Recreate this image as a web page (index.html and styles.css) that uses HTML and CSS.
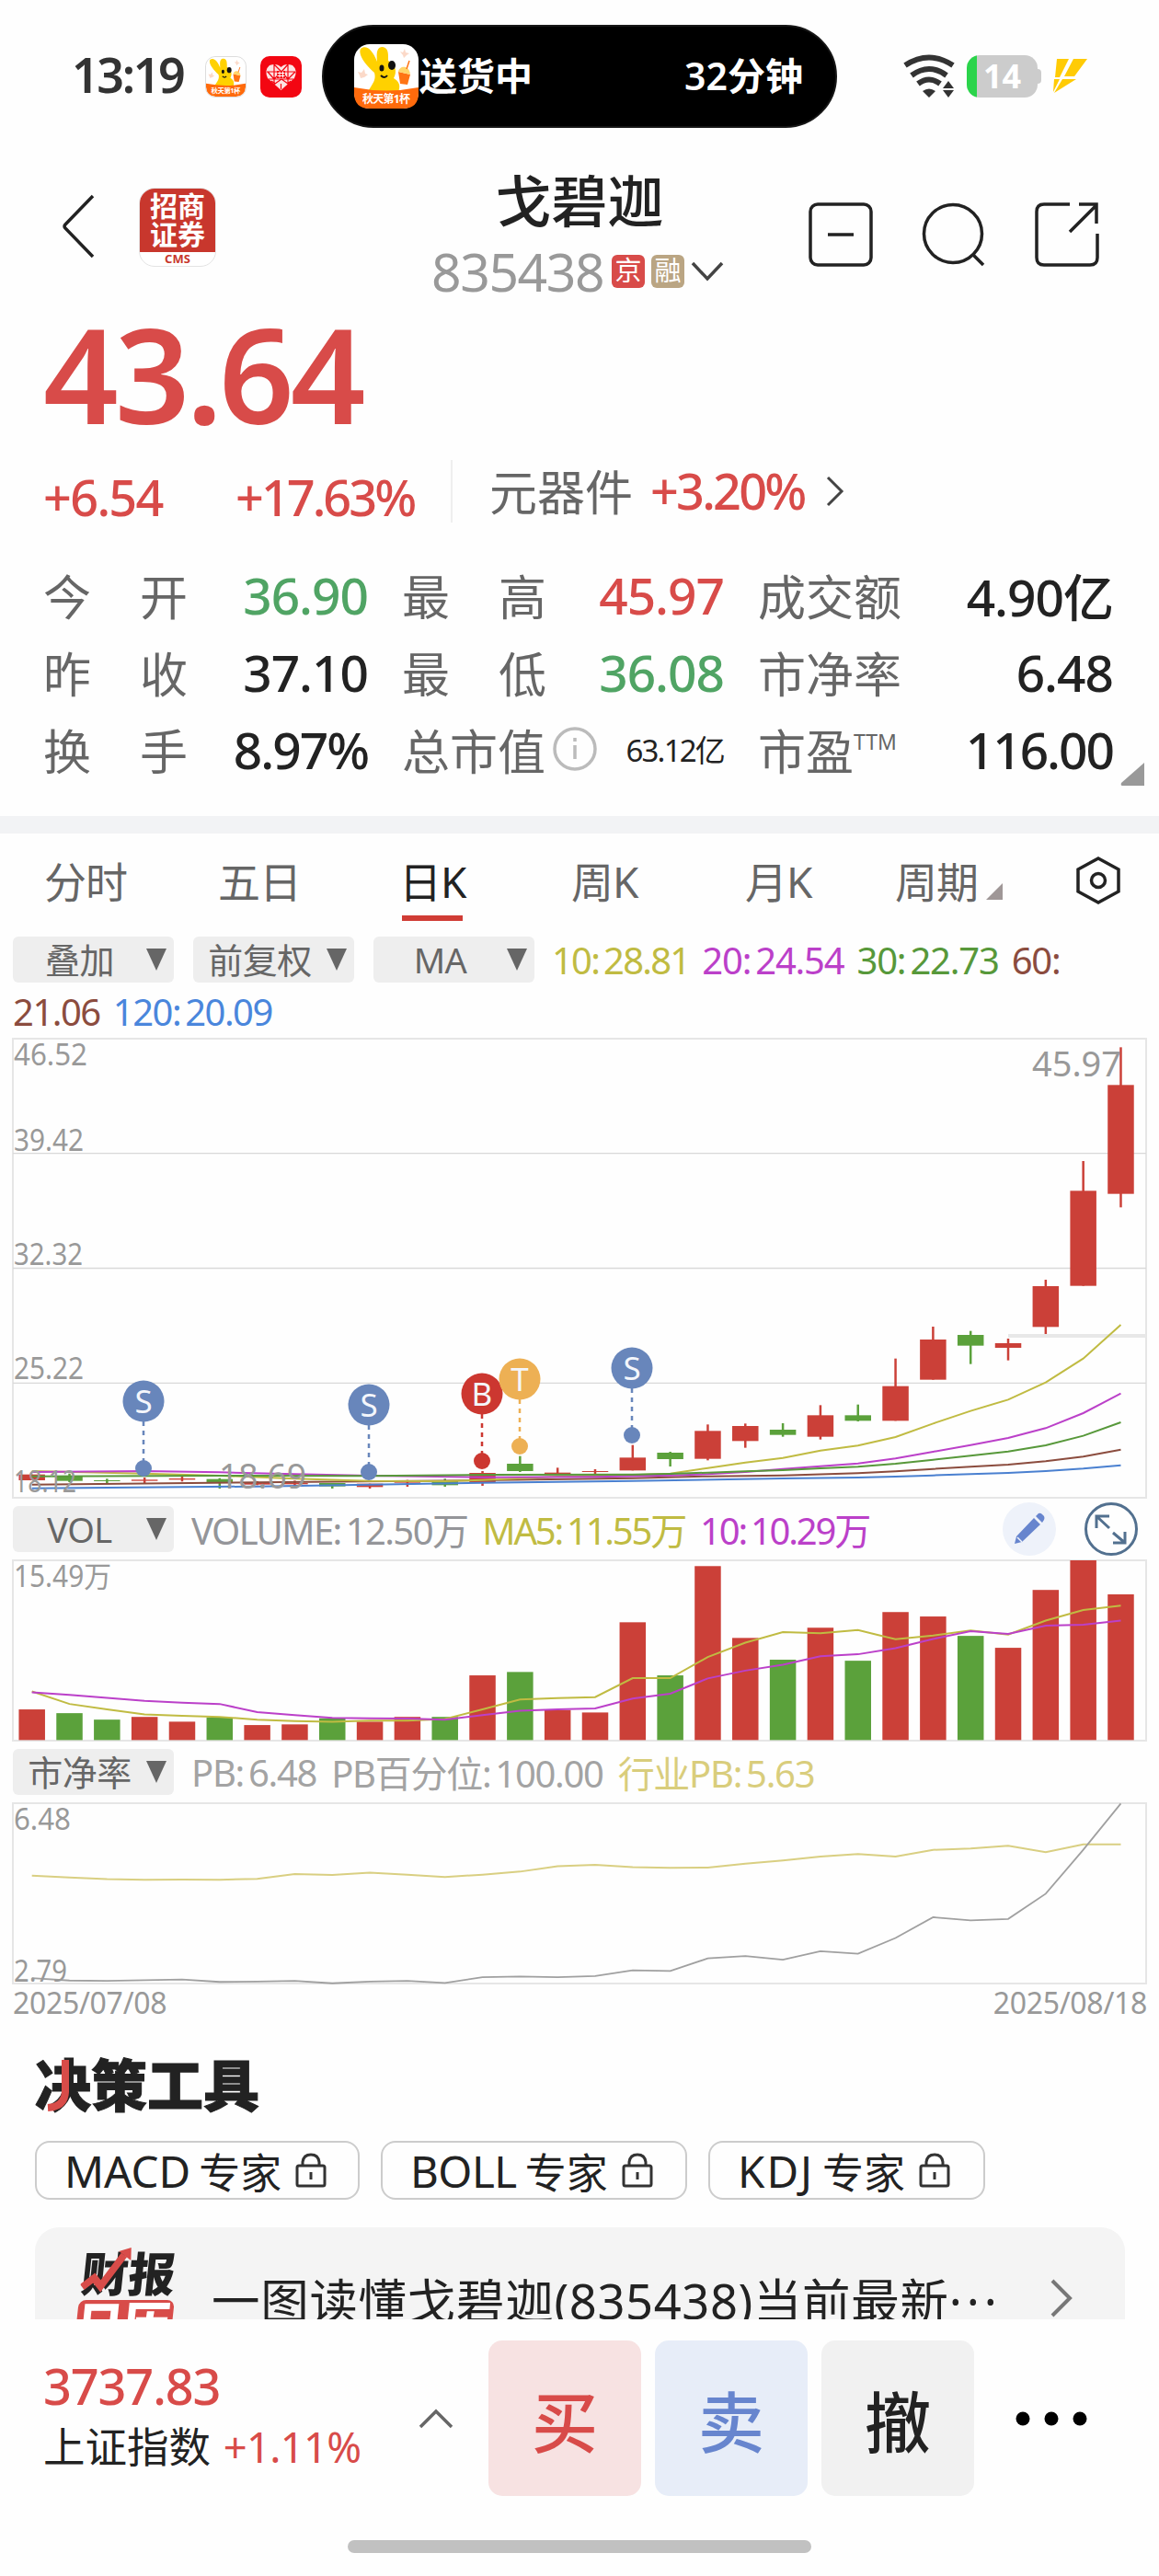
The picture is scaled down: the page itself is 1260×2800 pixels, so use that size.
FILE: index.html
```html
<!DOCTYPE html>
<html lang="zh-CN">
<head>
<meta charset="UTF-8">
<meta name="viewport" content="width=device-width, initial-scale=1.0">
<title>戈碧迦 835438</title>
<link rel="stylesheet" href="styles.css">
</head>
<body>

<!-- 公共图形 -->
<svg width="0" height="0" class="defs">
  <symbol id="rabbit" viewBox="0 0 70 70">
    <rect width="70" height="70" rx="17" fill="#fff"/>
    <path d="M13 58 C16 45 25 42 22 31 C12 22 4 11 7 5 C13 0 20 6 25 19 C24 8 25 3 31 3 C38 4 37 12 37 18 C45 21 47 30 43 37 C53 43 49 50 45 60 L13 60z" fill="#ffd100"/>
    <ellipse cx="30" cy="26" rx="2.5" ry="3.5" fill="#111"/>
    <ellipse cx="41" cy="23" rx="4" ry="5" fill="#111"/>
    <path d="M29 34 q4 4 7 0" stroke="#111" stroke-width="2" fill="none"/>
    <path d="M48 30 L61 33 L58 44 L50 43z" fill="#ff7414"/>
    <path d="M48 30 C49 23 60 22 61 33z" fill="#ffd56a"/>
    <path d="M57 27 L60 18" stroke="#ff7414" stroke-width="1.5"/>
    <path d="M4 30l4 1 3-4 1 5 3 1-4 3-4 1-1-3z M50 8l3 1 2-4 1 4 4 1-3 2-3 3-1-3z" fill="#fbd9c8"/>
    <path d="M0 47 Q35 54 70 47 V53 Q70 70 53 70 H17 Q0 70 0 53z" fill="#ff6a0c"/>
    <text x="35" y="64" text-anchor="middle" textLength="52" font-size="12" font-weight="700" fill="#fff">秋天第1杯</text>
  </symbol>
  <symbol id="lock" viewBox="0 0 34 38">
    <rect x="2" y="14" width="30" height="22" rx="2"/>
    <path d="M8 14 V10 Q9 2 17 2 Q25 2 26 10 V14 M17 21 V29"/>
  </symbol>
</svg>

<div class="status-bar">
  <div class="status-left">
    <span class="clock">13:19</span>
    <svg class="app-icon bordered" viewBox="0 0 70 70"><use href="#rabbit"/></svg>
    <svg class="app-icon" viewBox="0 0 45 45">
      <rect width="45" height="45" rx="10" fill="#f30612"/>
      <path d="M22.5 37 L8 24 Q4 15 10 10 Q18 7 22.5 12 Q27 7 35 10 Q41 15 37 24z" fill="#fde3e3"/>
      <path d="M7 17h31M9 25h27M15 9v22M30 9v22M15 9l8 8 7-8M8 17l7 8 8-8 7 8 8-8M12 27l4 3 7-5 7 5 3-3M22.500 30v6" stroke="#f30612" stroke-width="1.200" fill="none"/>
      <rect x="18" y="16" width="9" height="8" fill="#f30612"/>
      <path d="M18.500 18.500h8M18.500 21.500h8M21 16.500v7M24.500 16.500v7" stroke="#fff" stroke-width="1"/>
    </svg>
  </div>
  <div class="island">
    <svg class="island-icon" viewBox="0 0 70 70"><use href="#rabbit"/></svg>
    <span>送货中</span>
    <span class="eta">32分钟</span>
  </div>
  <div class="status-right">
    <svg width="58" height="48" viewBox="0 0 58 48" fill="none" stroke="#333" stroke-width="6">
      <path d="M3 12 Q29 -5 55 12"/>
      <path d="M10 23 Q29 9 48 23"/>
      <path d="M17 32 Q29 23 41 32"/>
      <path d="M22 40 Q29 35 36 40 L29 47z M50 29l6 8H44z M44 39h12l-6 8z" fill="#333" stroke="none"/>
    </svg>
    <div class="battery"><span>14</span></div>
    <svg class="bolt" width="40" height="40" viewBox="0 0 40 40">
      <path d="M6 1 H19 L9 21 H4z M24 1 H39 L25 20 H14z M3 23 H9 L2 37z M12 23 H27 L3 38z" fill="#ffcb05"/>
    </svg>
  </div>
</div>

<header class="header">
  <svg class="back" width="36" height="70" viewBox="0 0 36 70"><path d="M34 2 L4 33 Q2 35 4 37 L34 68"/></svg>
  <div class="broker">
    <div>招商<br>证券</div>
    <span>CMS</span>
  </div>
  <div class="title">
    <h1>戈碧迦</h1>
    <div class="code">
      <span>835438</span>
      <b class="tag red">京</b>
      <b class="tag gold">融</b>
      <svg width="36" height="24" viewBox="0 0 36 24"><path d="M2 3 L18 20 L34 3"/></svg>
    </div>
  </div>
  <div class="tools">
    <svg width="70" height="70" viewBox="0 0 70 70"><rect x="2" y="2" width="66" height="66" rx="8"/><path d="M21 35 H49"/></svg>
    <svg width="70" height="70" viewBox="0 0 70 70"><circle cx="34" cy="34" r="31.500"/><path d="M56 57 L67 68"/></svg>
    <svg width="70" height="70" viewBox="0 0 70 70"><path d="M38 2 H10 Q2 2 2 10 V60 Q2 68 10 68 H60 Q68 68 68 60 V34 M48 2 H67 V23 M67 3 L38 32"/></svg>
  </div>
</header>

<section class="quote">
  <div class="price">43.64</div>
  <div class="change">
    <span class="chg">+6.54</span>
    <span class="pct">+17.63%</span>
    <div class="sector">
      <span class="sector-name">元器件</span>
      <span class="sector-pct">+3.20%</span>
      <svg width="20" height="34" viewBox="0 0 20 34"><path d="M2 2 L17 17 L2 32"/></svg>
    </div>
  </div>
  <div class="stats">
    <div><label>今<i></i>开</label><b class="down">36.90</b></div>
    <div><label>最<i></i>高</label><b class="up">45.97</b></div>
    <div><label>成交额</label><b>4.90亿</b></div>
    <div><label>昨<i></i>收</label><b>37.10</b></div>
    <div><label>最<i></i>低</label><b class="down">36.08</b></div>
    <div><label>市净率</label><b>6.48</b></div>
    <div><label>换<i></i>手</label><b class="tight">8.97%</b></div>
    <div>
      <label>总市值</label>
      <svg class="info" width="48" height="48" viewBox="0 0 48 48"><circle cx="24" cy="24" r="22"/><path d="M24 20 V35 M24 12 V16"/></svg>
      <b class="small">63.12亿</b>
    </div>
    <div><label>市盈<sup>TTM</sup></label><b class="tight">116.00</b></div>
  </div>
  <svg class="corner" width="27" height="26" viewBox="0 0 27 26"><path d="M26 0 V25 H2 Q0 25 1 22z"/></svg>
</section>

<nav class="tabs">
  <a>分时</a>
  <a>五日</a>
  <a class="active">日K</a>
  <a>周K</a>
  <a>月K</a>
  <a>周期<svg width="18" height="18" viewBox="0 0 18 18"><path d="M18 0 V18 H0z" fill="#9f9797"/></svg></a>
  <svg class="setting" width="48" height="52" viewBox="0 0 48 52"><path d="M24 2 L46 14 V38 L24 50 L2 38 V14z"/><circle cx="24" cy="26" r="7.500"/></svg>
</nav>

<div class="legend">
  <span class="select"><em>叠加</em></span>
  <span class="select"><em>前复权</em></span>
  <span class="select"><em>MA</em></span>
  <span class="c10">10:<s></s>28.81</span>
  <span class="c20">20:<s></s>24.54</span>
  <span class="c30">30:<s></s>22.73</span>
  <span class="c60">60:</span>
</div>
<div class="legend second">
  <span class="c60">21.06</span>
  <span class="c120">120:<s></s>20.09</span>
</div>

<svg id="kline" class="chart" width="1260" height="516" viewBox="0 0 1260 516"></svg>

<div class="legend sub vol">
  <span class="select"><em>VOL</em></span>
  <span class="grey">VOLUME:<s></s>12.50万</span>
  <span class="c10">MA5:<s></s>11.55万</span>
  <span class="c20">10:<s></s>10.29万</span>
  <div class="round-btns">
    <svg width="58" height="58" viewBox="0 0 58 58">
      <circle cx="29" cy="29" r="29" fill="#eef2fa"/>
      <path d="M13 45 L15 37 L34 17 L41 24 L21 43z M36 15 L39 12 Q41 11 43 13 L45 15 Q46 17 45 19 L43 22z" fill="#6785ce"/>
      <path d="M16 38l5 5" stroke="#eef2fa" stroke-width="1.500"/>
    </svg>
    <svg width="58" height="58" viewBox="0 0 58 58" fill="none" stroke="#52708f" stroke-width="3">
      <circle cx="29" cy="29" r="27.500"/>
      <path d="M27 15 H13 V28 M13 15 L27 28 M31 44 H44 V32 M44 44 L31 33"/>
    </svg>
  </div>
</div>

<svg id="volume" class="chart" width="1260" height="213" viewBox="0 0 1260 213"></svg>

<div class="legend sub">
  <span class="select"><em>市净率</em></span>
  <span class="grey2">PB:<s></s>6.48</span>
  <span class="grey2">PB百分位:<s></s>100.00</span>
  <span class="sand">行业PB:<s></s>5.63</span>
</div>

<svg id="pb" class="chart" width="1260" height="206" viewBox="0 0 1260 206"></svg>

<div class="dates"><span>2025/07/08</span><span>2025/08/18</span></div>

<section class="decision">
  <h2>决策工具<svg width="26" height="58" viewBox="0 0 26 58"><path d="M20 1 V36 Q19 52 1 53" stroke="#d84c49" stroke-width="8" fill="none"/></svg></h2>
  <div class="experts">
    <span>MACD<em>专家</em><svg width="34" height="38"><use href="#lock"/></svg></span>
    <span>BOLL<em>专家</em><svg width="34" height="38"><use href="#lock"/></svg></span>
    <span>KDJ<em>专家</em><svg width="34" height="38"><use href="#lock"/></svg></span>
  </div>
  <div class="report">
    <div class="report-logo">
      <strong>财报</strong>
      <strong class="badge">日历</strong>
      <svg width="54" height="50" viewBox="0 0 54 50"><path d="M2 43 L14 33 L22 42 L44 8" fill="none" stroke="#d84c49" stroke-width="8"/><path d="M38 4 L51 0 L52 14z" fill="#d84c49"/></svg>
    </div>
    <p>一图读懂戈碧迦<span class="num">(835438)</span>当前最新<span>···</span></p>
    <svg class="more" width="26" height="42" viewBox="0 0 26 42"><path d="M3 2 L22 21 L3 40"/></svg>
  </div>
</section>

<footer class="trade">
  <div class="index">
    <div class="index-value">3737.83</div>
    <div class="index-name">上证指数 <span>+1.11%</span></div>
  </div>
  <svg class="expand" width="38" height="22" viewBox="0 0 38 22"><path d="M2 20 L19 3 L36 20"/></svg>
  <button class="buy">买</button>
  <button class="sell">卖</button>
  <button class="cancel">撤</button>
  <svg class="dots" width="80" height="16" viewBox="0 0 80 16"><circle cx="9" cy="8" r="7.500"/><circle cx="40" cy="8" r="7.500"/><circle cx="71" cy="8" r="7.500"/></svg>
</footer>
<div class="home-bar"></div>

<script src="chart.js"></script>
</body>
</html>
```
FILE: styles.css
```css
* {
  box-sizing: border-box;
}

body {
  margin: 0;
  width: 1260px;
  height: 2800px;
  overflow: hidden;
  background: #fefefe;
  color: #222;
  font-family: "Noto Sans", "Noto Sans CJK SC", sans-serif;
  display: flex;
  flex-direction: column;
}

svg {
  display: block;
  flex: none;
}

em, i {
  font-style: normal;
}

.defs {
  position: absolute;
}

/* 状态栏 */
.status-bar {
  height: 166px;
  flex: none;
  display: flex;
  padding-top: 27px;
}

.status-left {
  width: 350px;
  height: 112px;
  padding-left: 78px;
  display: flex;
  align-items: center;
}

.clock {
  width: 145px;
  padding-bottom: 5px;
  font-size: 52px;
  font-weight: 600;
  letter-spacing: -2.4px;
  color: #333;
}

.app-icon {
  width: 45px;
  height: 45px;
  margin-right: 15px;
}

.bordered {
  border: 1px solid #ddd;
  border-radius: 11px;
}

.island {
  width: 560px;
  height: 112px;
  border-radius: 56px;
  border: 2px solid #161616;
  background: #000;
  color: #fff;
  display: flex;
  align-items: center;
  padding: 0 35px 0 33px;
  font-size: 41px;
  font-weight: 600;
}

.island span {
  padding-bottom: 6px;
}

.island-icon {
  width: 70px;
  height: 70px;
  margin-right: 1px;
}

.eta {
  margin-left: auto;
}

.status-right {
  height: 112px;
  padding-left: 71px;
  display: flex;
  align-items: center;
}

.battery {
  width: 77px;
  height: 46px;
  margin-left: 12px;
  border-radius: 14px;
  background: linear-gradient(90deg, #2bd44b 11px, #ccc 11px);
  color: #fff;
  font-size: 36px;
  font-weight: 700;
  line-height: 46px;
  text-align: center;
  position: relative;
}

.battery::after {
  content: "";
  position: absolute;
  right: -4px;
  top: 15px;
  width: 4px;
  height: 16px;
  border-radius: 0 4px 4px 0;
  background: #ccc;
}

.bolt {
  margin-left: 15px;
}

/* 标题栏 */
.header {
  height: 170px;
  flex: none;
  display: flex;
  align-items: flex-start;
}

.header svg {
  fill: none;
  stroke: #222;
  stroke-width: 3.5;
}

.back {
  margin: 45px 0 0 67px;
}

.broker {
  width: 84px;
  height: 86px;
  margin: 38px 0 0 48px;
  border-radius: 17px;
  border: 1px solid #e4e4e4;
  background: #fff;
  overflow: hidden;
  text-align: center;
}

.broker div {
  height: 69px;
  padding-top: 3px;
  background: #c8372d;
  color: #fff;
  font-size: 30px;
  line-height: 31px;
  font-weight: 700;
}

.broker span {
  display: block;
  color: #c8372d;
  font-size: 13px;
  line-height: 14px;
  font-weight: 700;
}

.title {
  width: 322px;
  margin-left: 234px;
}

h1 {
  margin: 15px 0 0;
  font-size: 61px;
  line-height: 76px;
  font-weight: 500;
  text-align: center;
}

.code {
  display: flex;
  align-items: center;
  height: 76px;
  font-size: 57px;
  letter-spacing: -1.4px;
  color: #999;
}

.code > span {
  width: 196px;
}

.tag {
  width: 36px;
  height: 36px;
  margin-right: 7px;
  border-radius: 6px;
  color: #fff;
  font-size: 29px;
  line-height: 34px;
  letter-spacing: 0;
  font-weight: 400;
  text-align: center;
}

.tag.red { background: #d84b49; }
.tag.gold { background: #baa583; }

.code svg {
  stroke: #444;
}

.tools {
  display: flex;
  gap: 53px;
  margin: 54px 0 0 88px;
}

/* 行情 */
.quote {
  height: 551px;
  flex: none;
  padding: 0 48px 0 47px;
  position: relative;
}

.price {
  height: 146px;
  font-size: 143px;
  line-height: 140px;
  font-weight: 600;
  letter-spacing: -4px;
  color: #d84b49;
}

.change {
  display: flex;
  align-items: center;
  height: 82px;
  margin-top: 11px;
  font-size: 54px;
  font-weight: 500;
  letter-spacing: -1.7px;
  color: #d84b49;
}

.chg,
.pct {
  padding-top: 11px;
}

.chg { width: 209px; }

.pct {
  width: 234px;
  letter-spacing: -3px;
}

.sector {
  height: 68px;
  padding-left: 40px;
  border-left: 2px solid #efefef;
  display: flex;
  align-items: center;
}

.sector-name {
  width: 175px;
  margin-top: -4px;
  font-size: 52px;
  font-weight: 400;
  letter-spacing: 0;
  color: #666;
}

.sector-pct {
  width: 191px;
  margin-top: -3px;
  letter-spacing: -2.8px;
}

.sector svg {
  fill: none;
  stroke: #444;
  stroke-width: 3;
}

.stats {
  display: grid;
  grid-template-columns: 353px 350px 386px;
  grid-auto-rows: 84px;
  column-gap: 37px;
  margin-top: 29px;
}

.stats > div {
  display: flex;
  align-items: center;
}

.stats label {
  display: flex;
  font-size: 52px;
  color: #666;
}

.stats i {
  width: 53px;
}

.stats b {
  margin-left: auto;
  font-size: 55px;
  font-weight: 500;
  letter-spacing: -1px;
}

.stats b.tight {
  letter-spacing: -2px;
}

.stats b.small {
  font-size: 33px;
  font-weight: 400;
  letter-spacing: -1.8px;
}

.up { color: #d84b49; }
.down { color: #50a464; }

.stats sup {
  font-size: 23px;
  line-height: 58px;
}

.info {
  margin-left: 8px;
  fill: none;
  stroke: #bbb;
  stroke-width: 3.5;
}

.corner {
  position: absolute;
  right: 15px;
  bottom: 32px;
  fill: #999;
}

/* 周期 */
.tabs {
  height: 131px;
  flex: none;
  border-top: 19px solid #f2f3f5;
  display: flex;
  align-items: flex-start;
  padding-left: 48px;
}

.tabs a {
  width: 189px;
  height: 96px;
  font-size: 46px;
  line-height: 104px;
  letter-spacing: -1px;
  color: #666;
}

.tabs a:nth-child(2) { width: 197px; }
.tabs a:nth-child(3) { width: 187px; }
.tabs a:nth-child(5) { width: 163px; }

.tabs a:nth-child(6) {
  display: flex;
  width: 197px;
}

.tabs a svg {
  margin: 54px 0 0 9px;
}

.tabs .active {
  color: #222;
  background: linear-gradient(#d03c35, #d03c35) 3px 89px / 66px 6px no-repeat;
}

.setting {
  margin-top: 25px;
  fill: none;
  stroke: #222;
  stroke-width: 3.5;
}

/* 指标行 */
.legend {
  height: 50px;
  flex: none;
  padding-left: 14px;
  display: flex;
  align-items: center;
  font-size: 40px;
  letter-spacing: -1.2px;
  white-space: nowrap;
}

.legend > span {
  margin-right: 14px;
}

.legend s {
  display: inline-block;
  width: 5px;
}

.legend .c10 {
  letter-spacing: -1.8px;
}

.legend.second {
  height: 52px;
  padding-top: 11px;
  letter-spacing: -1.5px;
}

.legend .select {
  width: 175px;
  height: 50px;
  margin-right: 21px;
  border-radius: 6px;
  background: #eee;
  color: #666;
  font-size: 38px;
  line-height: 50px;
  letter-spacing: -0.5px;
  display: flex;
  align-items: center;
}

.legend .select:nth-child(3) {
  margin-right: 19px;
}

.select em {
  flex: 1;
  text-align: center;
}

.select::after {
  content: "";
  margin-right: 8px;
  border: 11px solid transparent;
  border-top: 24px solid #666;
  border-bottom: 0;
}

.c10 { color: #c0bb42; }
.c20 { color: #bb40c9; }
.c30 { color: #57983a; }
.c60 { color: #8b4c3e; }
.c120 { color: #4a86dc; }
.grey { color: #949599; }
.grey2 { color: #a3a3a3; }
.sand { color: #d9cd7c; }

.legend.sub {
  margin-top: 1px;
  letter-spacing: -1.3px;
}

.legend.sub > span {
  margin-right: 16px;
}

.legend.sub .select {
  margin-right: 19px;
}

.legend.vol {
  letter-spacing: -1.6px;
}

.legend.vol .c10,
.legend.vol .c20 {
  letter-spacing: -2.2px;
}

.round-btns {
  display: flex;
  gap: 31px;
  margin: 0 23px 0 auto;
}

.dates {
  height: 44px;
  flex: none;
  display: flex;
  justify-content: space-between;
  padding: 0 13px 0 14px;
  font-size: 32px;
  line-height: 39px;
  letter-spacing: -0.3px;
  color: #999;
}

/* 决策工具 */
.decision {
  height: 320px;
  flex: none;
  overflow: hidden;
  padding: 28px 37px 0 38px;
}

h2 {
  width: 250px;
  margin: 0;
  font-size: 61px;
  line-height: 76px;
  font-weight: 900;
  -webkit-text-stroke: 1px #222;
  position: relative;
}

h2 svg {
  position: absolute;
  left: 13px;
  top: 9px;
}

.experts {
  display: flex;
  gap: 23px;
  margin-top: 22px;
}

.experts span {
  width: 353px;
  height: 64px;
  padding-left: 30px;
  border: 2px solid #ccc;
  border-radius: 16px;
  display: flex;
  align-items: center;
  font-size: 47.5px;
}

.experts span:nth-child(2) {
  width: 333px;
  letter-spacing: -0.5px;
}

.experts span:nth-child(3) {
  width: 301px;
  letter-spacing: 2px;
}

.experts em {
  margin: 0 15px 0 9px;
  font-size: 45px;
  letter-spacing: 0;
}

.experts svg {
  fill: none;
  stroke: #333;
  stroke-width: 3;
}

.report {
  height: 154px;
  margin-top: 30px;
  border-radius: 26px 26px 0 0;
  background: #f4f4f4;
  display: flex;
  align-items: center;
  padding: 0 56px 0 48px;
}

.report-logo {
  width: 144px;
  position: relative;
  transform: skewX(-6deg);
}

.report-logo strong {
  display: block;
  width: 104px;
  font-size: 51px;
  line-height: 50px;
  font-weight: 900;
}

.report-logo .badge {
  margin-top: 4px;
  border-radius: 8px;
  background: #d84c49;
  color: #fff;
}

.report-logo svg {
  position: absolute;
  left: 0;
  top: -3px;
}

.report p {
  margin: 0;
  font-size: 52.5px;
  letter-spacing: 0.7px;
  white-space: nowrap;
}

.report p span {
  letter-spacing: 5px;
}

.report p .num {
  letter-spacing: 0.6px;
}

.more {
  margin-left: auto;
  fill: none;
  stroke: #777;
  stroke-width: 4;
}

/* 底部交易栏 */
.trade {
  height: 234px;
  flex: none;
  padding-left: 47px;
  display: flex;
  align-items: flex-start;
  padding-top: 23px;
}

.index {
  width: 408px;
  padding-top: 12px;
}

.index-value {
  font-size: 54px;
  line-height: 74px;
  font-weight: 500;
  letter-spacing: -1.1px;
  color: #d84b49;
}

.index-name {
  font-size: 45.5px;
  line-height: 58px;
  white-space: nowrap;
}

.index-name span {
  color: #d84b49;
  margin-left: 2px;
  letter-spacing: -0.8px;
}

.expand {
  margin: 74px 38px 0 0;
  fill: none;
  stroke: #666;
  stroke-width: 3.5;
}

.trade button {
  width: 166px;
  height: 169px;
  margin-right: 15px;
  padding: 0;
  border: none;
  border-radius: 15px;
  font-family: inherit;
  font-size: 72px;
  font-weight: 500;
}

.buy { background: #f7e2e2; color: #d84b49; }
.sell { background: #e7edf8; color: #6785ce; }
.cancel { background: #f1f1f1; color: #222; }

.dots {
  margin: 77px 0 0 29px;
}

.home-bar {
  width: 504px;
  height: 14px;
  flex: none;
  margin: 6px auto 0;
  border-radius: 7px;
  background: #c1c1c1;
}
```
FILE: chart.js
```js
const RED = '#cb4038', GREEN = '#5ba13b', GRID = '#e6e6e6';
const STEP = 40.82, X0 = 34.7, BAR = 28.5;
const x = i => X0 + i * STEP;

const line = (x1, y1, x2, y2, color, w, extra = '') =>
  `<line x1="${x1}" y1="${y1}" x2="${x2}" y2="${y2}" stroke="${color}" stroke-width="${w}" ${extra}/>`;

const frame = (top, bottom) =>
  `<rect x="14" y="${top}" width="1232" height="${bottom - top}" fill="none" stroke="${GRID}" stroke-width="2"/>`;

const label = (px, y, text, len, size = 32, color = '#999') =>
  `<text x="${px}" y="${y}" font-size="${size}" textLength="${len}" lengthAdjust="spacingAndGlyphs" fill="${color}">${text}</text>`;

const poly = (pts, color, w = 2) =>
  `<polyline points="${pts.map(p => p.join(',')).join(' ')}" fill="none" stroke="${color}" stroke-width="${w}"/>`;

// [实体上沿, 实体下沿, 最高, 最低, 涨跌]，单位 1/3 像素
const candles = [
  [1448,1467,1448,1467,1],[1453,1469,1445,1473,0],[1467,1470,1462,1476,0],[1465,1469,1458,1478,1],
  [1461,1465,1454,1471,1],[1463,1476,1460,1494,0],[1475,1481,1470,1483,1],[1476,1480,1468,1488,1],
  [1476,1487,1476,1494,0],[1478,1489,1478,1494,1],[1472,1475,1466,1488,1],[1467,1483,1462,1488,0],
  [1443,1473,1437,1485,1],[1413,1437,1388,1440,0],[1442,1446,1426,1449,1],[1437,1440,1431,1447,1],
  [1393,1435,1352,1435,1],[1377,1398,1374,1422,0],[1306,1397,1285,1402,1],[1290,1339,1282,1361,1],
  [1302,1319,1281,1325,0],[1255,1325,1222,1334,1],[1255,1273,1220,1275,0],[1160,1273,1070,1273,1],
  [1008,1139,966,1139,1],[993,1028,980,1088,0],[1020,1035,1005,1076,1],[834,967,813,990,1],
  [523,833,426,833,1],[178,533,55,577,1]
];

// 均线: [序号, 高度]
const averages = [
  ['#4a80d0', [[0,1493],[6,1487],[12,1475],[16,1469],[20,1461],[22,1458],[23,1455],[24,1451],[25,1447],[26,1443],[27,1437],[28,1429],[29,1418]]],
  ['#8b4c3e', [[0,1481],[6,1474],[12,1467],[16,1460],[18,1454],[20,1451],[22,1444],[23,1438],[24,1430],[25,1423],[26,1416],[27,1405],[28,1390],[29,1367]]],
  ['#c0bb42', [[0,1437],[3,1445],[5,1452],[7,1462],[9,1469],[11,1470],[12,1466],[14,1455],[16,1450],[17,1445],[18,1427],[19,1409],[20,1394],[21,1370],[22,1354],[23,1326],[24,1282],[25,1241],[26,1204],[27,1148],[28,1070],[29,960]]],
  ['#bb40c9', [[0,1440],[3,1437],[5,1441],[7,1447],[9,1452],[12,1457],[15,1456],[17,1451],[18,1447],[19,1440],[20,1430],[21,1421],[22,1412],[23,1396],[24,1374],[25,1352],[26,1329],[27,1297],[28,1248],[29,1184]]],
  ['#57983a', [[0,1454],[5,1452],[9,1453],[12,1449],[16,1448],[17,1446],[18,1442],[19,1438],[20,1434],[21,1428],[22,1423],[23,1413],[24,1400],[25,1387],[26,1373],[27,1353],[28,1322],[29,1278]]]
];

const marks = [
  ['S', 156, 403, '#6886bb'], ['S', 401, 407, '#6886bb'], ['B', 524, 395, '#cc3730'],
  ['T', 565, 379, '#edb054'], ['S', 687, 367, '#6886bb']
];

function drawKline() {
  let s = frame(9, 508);
  [133.7, 258.5, 383.3].forEach(y => { s += line(14, y, 1246, y, '#d9d9d9', 1.3); });
  s += line(1096, 332, 1246, 332, '#e8e8e8', 4);
  candles.forEach(([t, b, hi, lo, up], i) => {
    const c = up ? RED : GREEN;
    s += line(x(i), hi / 3, x(i), lo / 3, c, 2.5);
    s += `<rect x="${x(i) - BAR / 2}" y="${t / 3}" width="${BAR}" height="${(b - t) / 3}" fill="${c}"/>`;
  });
  averages.forEach(([c, pts]) => { s += poly(pts.map(([i, y]) => [x(i), y / 3]), c); });
  s += label(15, 38, '46.52', 80) + label(15, 131, '39.42', 76) + label(15, 255, '32.32', 75);
  s += label(15, 379, '25.22', 76) + label(15, 502, '18.12', 68);
  s += label(238, 498, '18.69', 95, 39) + label(1122, 50, '45.97', 97, 39);
  marks.forEach(([t, cx, cy, c]) => {
    s += line(cx, cy + 22, cx, cy + 66, c, 2.5, 'stroke-dasharray="5 5"');
    s += `<circle cx="${cx}" cy="${cy}" r="22.5" fill="${c}"/><circle cx="${cx}" cy="${cy + 73}" r="9" fill="${c}"/>`;
    s += `<text x="${cx}" y="${cy + 12.5}" font-size="35" text-anchor="middle" fill="#f4f6fb">${t}</text>`;
  });
  document.getElementById('kline').innerHTML = s;
}

const K = 0.37;
const volumes = [643,654,673,665,679,667,689,687,669,679,665,665,543,533,645,652,387,543,222,433,497,403,500,357,370,427,462,292,205,305];
const volUp = '100110110110101110110101101111';
const vma5 = [590,627,643,658,662,665,673,677,679,676,676,671,643,614,610,607,551,551,489,447,416,419,410,437,426,411,423,382,351,338];
const vma10 = [593,600,609,618,623,627,651,660,668,669,670,673,660,647,643,640,611,597,552,529,512,487,481,463,436,413,421,397,394,382];

function drawVolume() {
  const y = v => (v - 205) * K + 9;
  let s = frame(9, 205);
  volumes.forEach((v, i) => {
    s += `<rect x="${x(i) - BAR / 2}" y="${y(v)}" width="${BAR}" height="${y(733) - y(v)}" fill="${volUp[i] === '1' ? RED : GREEN}"/>`;
  });
  s += poly(vma5.map((v, i) => [x(i), y(v)]), '#c0bb42') + poly(vma10.map((v, i) => [x(i), y(v)]), '#bb40c9');
  s += label(15, 38, '15.49万', 106);
  document.getElementById('volume').innerHTML = s;
}

const industry = [1131,1136,1141,1143,1142,1143,1140,1126,1129,1122,1128,1135,1128,1119,1103,1099,1106,1108,1107,1096,1086,1075,1067,1075,1055,1051,1043,1062,1039,1039];
const pb = [1432,1439,1440,1438,1436,1443,1442,1440,1447,1442,1440,1446,1429,1427,1429,1426,1409,1411,1374,1367,1378,1353,1360,1314,1253,1262,1258,1184,1055,919];

function drawPb() {
  const y = v => (v - 918) * K + 9;
  let s = frame(9, 205);
  s += poly(industry.map((v, i) => [x(i), y(v)]), '#d9cf82') + poly(pb.map((v, i) => [x(i), y(v)]), '#a0a0a0', 1.8);
  s += label(15, 38, '6.48', 62) + label(15, 203, '2.79', 58);
  document.getElementById('pb').innerHTML = s;
}

drawKline();
drawVolume();
drawPb();
```
